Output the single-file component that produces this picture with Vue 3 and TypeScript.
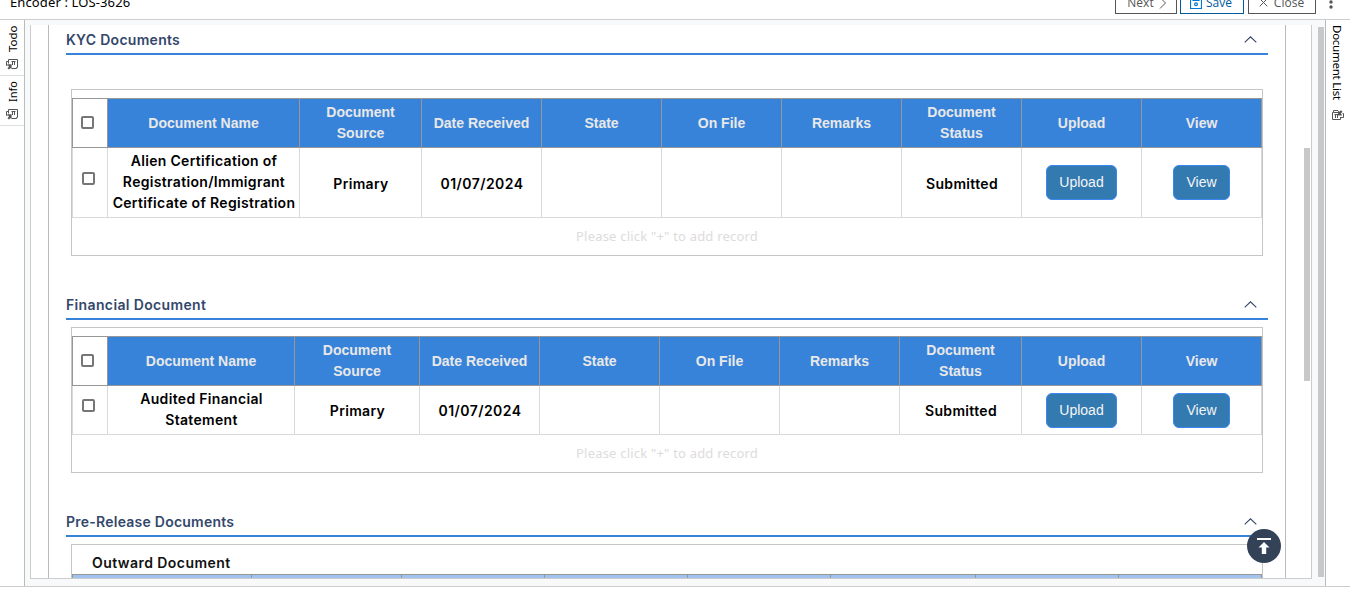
<script setup lang="ts">
interface Row {
  name: string[]
  source: string
  date: string
  status: string
}
interface Panel {
  id: string
  title: string
  cols: string
  rows: Row[]
}

const heads: string[] = ['Document Name', 'Document Source', 'Date Received', 'State', 'On File', 'Remarks', 'Document Status', 'Upload', 'View']

const panels: Panel[] = [
  {
    id: 'kyc',
    title: 'KYC Documents',
    cols: '35px 192px 122px 120px 120px 120px 120px 120px 120px 120px',
    rows: [{ name: ['Alien Certification of', 'Registration/Immigrant', 'Certificate of Registration'], source: 'Primary', date: '01/07/2024', status: 'Submitted' }],
  },
  {
    id: 'fin',
    title: 'Financial Document',
    cols: '35px 187px 125px 120px 120px 120px 120px 122px 120px 120px',
    rows: [{ name: ['Audited Financial', 'Statement'], source: 'Primary', date: '01/07/2024', status: 'Submitted' }],
  },
]
const leftTabs: string[] = ['Todo', 'Info']
</script>

<template>
  <div class="app">
    <header class="top">
      <div class="crumb">Encoder : LOS-3626</div>
      <div class="actions">
        <button class="btn next">Next
          <svg width="8" height="12" viewBox="0 0 8 12"><path d="M1 0.5L6.5 6L1 11.5" /></svg>
        </button>
        <button class="btn save">
          <svg width="12" height="12" viewBox="0 0 12 12"><path d="M.5.5h11v11H.5zM3 .5v3h6v-3" /><circle cx="6" cy="7.2" r="1.4" /></svg>
          Save</button>
        <button class="btn close">
          <svg width="9" height="9" viewBox="0 0 9 9"><path d="M.7.7l7.6 7.6M8.3.7L.7 8.3" /></svg>
          Close</button>
        <svg class="dots" width="4" height="14" viewBox="0 0 4 14"><circle cx="2" cy="2" r="1.7" /><circle cx="2" cy="7" r="1.7" /><circle cx="2" cy="12" r="1.7" /></svg>
      </div>
    </header>

    <div class="body">
      <aside class="left">
        <div v-for="t in leftTabs" :key="t" class="tab" :class="t.toLowerCase()">
          <span class="vert up">{{ t }}</span>
          <svg width="12" height="11" viewBox="0 0 12 11"><path d="M2.5.5h9v8h-1v1H6" /><path d="M2.5.5v4M2.5 2.5h-2v4h1M5.5 2.5h4M6.5 3v3M8.5 3v3" /><path class="fill" d="M1 5.3h4.6v4.9L4.4 8.9 3 10.6 1.5 9.3l1.5-1.7z" /></svg>
        </div>
      </aside>

      <main class="work">
        <div class="frame">
          <div class="sheet">
            <section v-for="p in panels" :key="p.id" class="section" :class="p.id">
              <div class="title">
                <h2>{{ p.title }}</h2>
                <svg width="13" height="7" viewBox="0 0 13 7"><path d="M.7 6.4L6.5.8l5.8 5.6" /></svg>
              </div>
              <div class="box">
                <div class="grid head" :style="{ gridTemplateColumns: p.cols }">
                  <div class="cell check"><i class="cb"></i></div>
                  <div v-for="h in heads" :key="h" class="cell blue"><span :class="{ narrow: h.startsWith('Document S') }">{{ h }}</span></div>
                </div>
                <div v-for="r in p.rows" :key="r.date" class="grid row" :style="{ gridTemplateColumns: p.cols }">
                  <div class="cell check"><i class="cb"></i></div>
                  <div class="cell name"><div v-for="n in r.name" :key="n">{{ n }}</div></div>
                  <div class="cell val">{{ r.source }}</div>
                  <div class="cell val date">{{ r.date }}</div>
                  <div class="cell"></div>
                  <div class="cell"></div>
                  <div class="cell"></div>
                  <div class="cell val">{{ r.status }}</div>
                  <div class="cell"><button class="act">Upload</button></div>
                  <div class="cell"><button class="act">View</button></div>
                </div>
                <div class="hint">Please click "+" to add record</div>
              </div>
            </section>
            <section class="section pre">
              <div class="title">
                <h2>Pre-Release Documents</h2>
                <svg width="13" height="7" viewBox="0 0 13 7"><path d="M.7 6.4L6.5.8l5.8 5.6" /></svg>
              </div>
              <div class="box">
                <h3>Outward Document</h3>
                <div class="pale"><i v-for="n in 8" :key="n"></i></div>
              </div>
            </section>
          </div>
          <div class="thumb inner"></div>
        </div>
        <div class="thumb outer"></div>
      </main>

      <aside class="right">
        <span class="vert">Document List</span>
        <svg width="12" height="11" viewBox="0 0 12 11"><path d="M8.5 9.5h-8v-7h1v-2H6M1.5 2.5H6M2.5 4.5h4M3.5 5v3M5.5 5v3M8.5 7v2.5M8.5 7.5h3v-4h-1" /><path class="fill" d="M6 5.4V.4L7.3 1.7 9 .2l1.5 1.5-1.7 1.9 1.5 1.8z" /></svg>
      </aside>
    </div>
    <button class="totop" aria-label="Back to top">
      <svg width="14" height="17" viewBox="0 0 14 17"><path d="M0 0h14v2H0zM7 4l5.5 5.5H9.2V16H4.8V9.5H1.5z" /></svg>
    </button>
  </div>
</template>

<style>
body { margin: 0; background: #fff; }
</style>

<style scoped>
* { box-sizing: border-box; }
.app { position: relative; width: 1350px; height: 602px; overflow: hidden; background: #fff; font-family: "Noto Sans", sans-serif; color: #000; }
svg { fill: none; stroke: currentColor; flex: none; }
button { font-family: inherit; }
.top { height: 20px; border-bottom: 1px solid #ccc; display: flex; justify-content: space-between; overflow: hidden; }
.crumb { margin: -8px 0 0 10px; font-size: 13px; line-height: 20px; height: 20px; letter-spacing: .12px; }
.actions { display: flex; align-items: flex-start; gap: 3px; padding-right: 17px; }
.btn { height: 25px; margin-top: -11px; padding: 2px 0 0; border: 1px solid #555; background: #fff; color: #555; display: flex; align-items: center; justify-content: center; font-family: "Open Sans", sans-serif; font-size: 12px; gap: 5px; line-height: 17px; }
.next { width: 62px; padding-left: 2px; }
.save { width: 64px; color: #005a9c; border-color: #005a9c; gap: 4px; padding-right: 2px; }
.save svg { color: #0078d4; stroke-width: 1.2; }
.close { width: 68px; margin-left: 1px; gap: 6px; padding-right: 1px; }
.dots { margin: -5px 0 0 10px; fill: #555; stroke: none; }
.body { display: flex; height: 567px; border-bottom: 1px solid #ccc; }
.left { width: 25px; border-right: 1px solid #bbb; }
.tab { border-bottom: 1px solid #ddd; display: flex; flex-direction: column; align-items: center; color: #000; }
.tab svg, .right svg { color: #555; }
.fill { fill: #555; stroke: none; }
.tab.todo { height: 56px; padding-top: 6px; }
.tab.info { height: 50px; padding-top: 6px; }
.vert { writing-mode: vertical-rl; font-size: 11.5px; line-height: 16px; white-space: nowrap; }
.up { transform: rotate(180deg); margin-left: 2px; }
.todo .vert { height: 26px; margin-bottom: 7px; }
.info .vert { height: 20px; margin-bottom: 7px; font-size: 11px; }
.work { flex: 1; display: flex; background: #f8f9fb; padding: 5px 1px 0 5px; }
.frame { width: 1282px; height: 554px; background: #fff; border: 1px solid #ccc; border-top: 0; display: flex; overflow: hidden; }
.sheet { width: 1238px; height: 553px; margin-left: 17px; border: 1px solid #bbb; border-width: 0 1px; padding: 0 17px; overflow: hidden; }
.thumb { background: #c8c8c8; }
.inner { width: 6px; height: 233px; margin: 123px 0 0 18px; }
.outer { width: 6px; height: 550px; margin: 2px 0 0 6px; }
.title { display: flex; justify-content: space-between; align-items: center; height: 30px; border-bottom: 2px solid #3883da; padding-right: 11px; color: #344563; }
.title svg { margin-top: 1px; stroke-width: 1.1; }
h2, h3 { margin: 0; font-family: Inter, sans-serif; font-size: 14px; font-weight: 600; line-height: 20px; }
h2 { color: #33486b; letter-spacing: .28px; padding-top: 2px; }
.fin h2 { letter-spacing: .36px; }
.pre h2 { letter-spacing: .24px; }
.box { margin: 7px 5px 0; border: 1px solid #c5c5c5; padding-top: 8px; height: 146px; }
.kyc .box { margin-top: 34px; height: 167px; }
.fin, .pre { margin-top: 34px; }
.grid { display: grid; }
.head { height: 50px; border: 1px solid #979797; border-right: 0; }
.cell { display: flex; align-items: center; justify-content: center; border-right: 1px solid #d9d9d9; font-size: 14px; }
.head .cell { border-color: #979797; }
.blue { background: #3883da; color: #e8e8e8; font: bold 14px/21px "Liberation Sans", sans-serif; text-align: center; padding-bottom: 0; }
.narrow { width: 80px; }
.cb { width: 13px; height: 13px; border: 2px solid #767676; border-radius: 2px; background: #fff; }
.head .cb { margin: -2px 6px 0 0; }
.row { height: 49px; border: 1px solid #d9d9d9; border-width: 0 0 1px 1px; }
.kyc .row { height: 70px; }
.row .cb { margin: -9px 4px 0 0; }
.name, .val { font: 600 14px/21px Inter, sans-serif; letter-spacing: .32px; flex-direction: column; white-space: nowrap; padding-left: 1px; }
.name { padding-bottom: 2px; }
.val { padding-top: 2px; }
.fin .val { padding-top: 1px; }
.date { letter-spacing: .42px; }
.act { height: 35px; padding: 0 12px 1px; border: 1px solid #3b87f0; border-radius: 6px; background: #337ab0; color: #f5f5f5; font: 14px/20px "Liberation Sans", sans-serif; }
.hint { height: 37px; line-height: 37px; text-align: center; color: #dcdcdc; font-size: 13px; letter-spacing: .2px; }
.pre .box { padding: 0; }
h3 { margin: 8px 0 1px 20px; line-height: 20px; color: #111; letter-spacing: .44px; }
.pale { display: grid; grid-template-columns: 179px 150px 143px 143px 143px 145px 143px 143px; height: 40px; border: 1px solid #979797; background: #a0c3ef; border-right: 0; }
.pale i { border-right: 1px solid #979797; }
.right { width: 25px; border-left: 1px solid #bbb; display: flex; flex-direction: column; align-items: center; padding-top: 5px; }
.right .vert { height: 75px; margin-bottom: 10px; margin-right: 2px; letter-spacing: -.25px; }
.totop { position: absolute; left: 1247px; top: 529px; width: 34px; height: 34px; border: 0; border-radius: 50%; padding: 0; background: #344258; color: #fff; display: flex; align-items: center; justify-content: center; }
.totop svg { fill: #fff; stroke: none; }
</style>
